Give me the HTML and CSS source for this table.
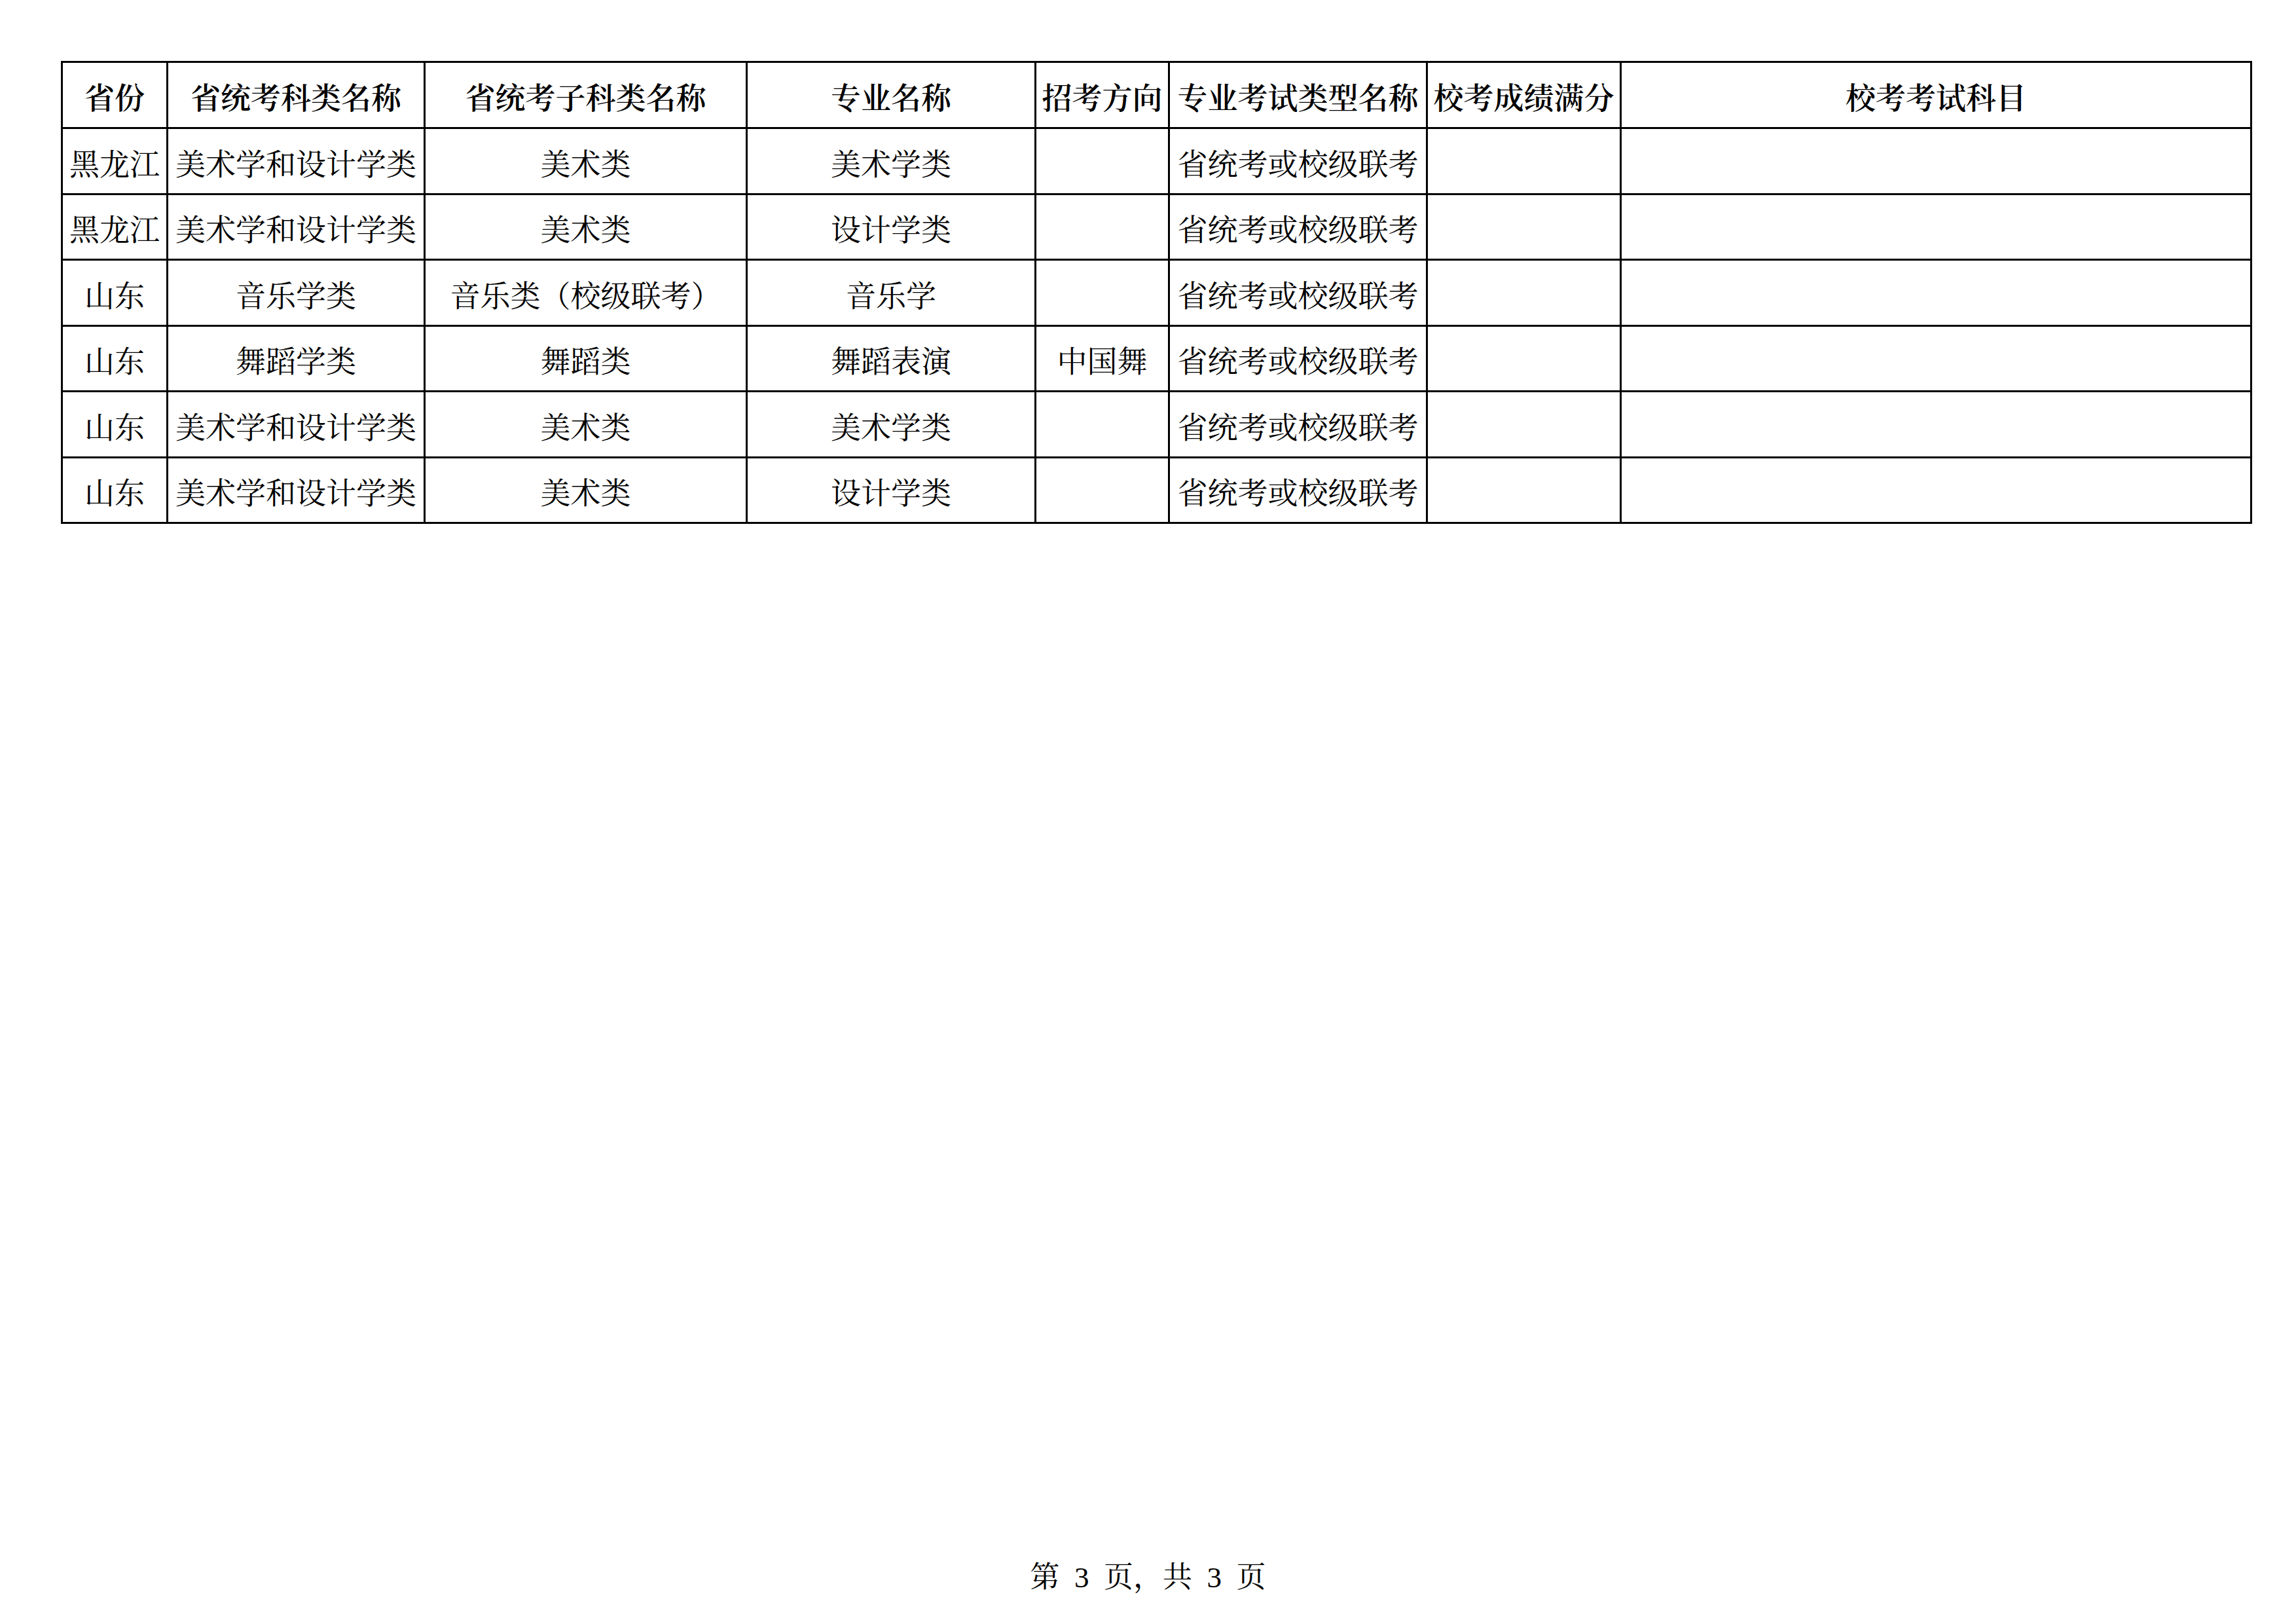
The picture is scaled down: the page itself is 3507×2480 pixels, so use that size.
FILE: index.html
```html
<!DOCTYPE html>
<html lang="zh-CN">
<head>
<meta charset="utf-8">
<title>第 3 页</title>
<link rel="stylesheet" href="styles.css">
</head>
<body>
<div class="page">
  <div class="sheet">
    <div class="cell head">省份</div>
    <div class="cell head">省统考科类名称</div>
    <div class="cell head">省统考子科类名称</div>
    <div class="cell head">专业名称</div>
    <div class="cell head">招考方向</div>
    <div class="cell head">专业考试类型名称</div>
    <div class="cell head">校考成绩满分</div>
    <div class="cell head">校考考试科目</div>

    <div class="cell">黑龙江</div>
    <div class="cell">美术学和设计学类</div>
    <div class="cell">美术类</div>
    <div class="cell">美术学类</div>
    <div class="cell"></div>
    <div class="cell">省统考或校级联考</div>
    <div class="cell"></div>
    <div class="cell"></div>

    <div class="cell">黑龙江</div>
    <div class="cell">美术学和设计学类</div>
    <div class="cell">美术类</div>
    <div class="cell">设计学类</div>
    <div class="cell"></div>
    <div class="cell">省统考或校级联考</div>
    <div class="cell"></div>
    <div class="cell"></div>

    <div class="cell">山东</div>
    <div class="cell">音乐学类</div>
    <div class="cell">音乐类（校级联考）</div>
    <div class="cell">音乐学</div>
    <div class="cell"></div>
    <div class="cell">省统考或校级联考</div>
    <div class="cell"></div>
    <div class="cell"></div>

    <div class="cell">山东</div>
    <div class="cell">舞蹈学类</div>
    <div class="cell">舞蹈类</div>
    <div class="cell">舞蹈表演</div>
    <div class="cell">中国舞</div>
    <div class="cell">省统考或校级联考</div>
    <div class="cell"></div>
    <div class="cell"></div>

    <div class="cell">山东</div>
    <div class="cell">美术学和设计学类</div>
    <div class="cell">美术类</div>
    <div class="cell">美术学类</div>
    <div class="cell"></div>
    <div class="cell">省统考或校级联考</div>
    <div class="cell"></div>
    <div class="cell"></div>

    <div class="cell">山东</div>
    <div class="cell">美术学和设计学类</div>
    <div class="cell">美术类</div>
    <div class="cell">设计学类</div>
    <div class="cell"></div>
    <div class="cell">省统考或校级联考</div>
    <div class="cell"></div>
    <div class="cell"></div>
  </div>
  <div class="footer">第 3 页，共 3 页</div>
</div>
</body>
</html>
```

FILE: styles.css
```css
html, body {
  margin: 0;
  padding: 0;
  background: #ffffff;
}

.page {
  width: 3507px;
  height: 2480px;
  box-sizing: border-box;
  padding: 93px 0 0 93px;
  color: #000000;
  font-family: "Noto Serif CJK SC", "Noto Sans CJK SC", serif;
}

.sheet {
  display: grid;
  grid-template-columns: 161px 393px 492px 441px 204px 394px 296px 963px;
  grid-template-rows: 101px 101px 100px 101px 100px 101px 100px;
  width: max-content;
  border-top: 3px solid #000;
  border-left: 3px solid #000;
}

.cell {
  box-sizing: border-box;
  border-right: 3px solid #000;
  border-bottom: 3px solid #000;
  display: flex;
  align-items: center;
  justify-content: center;
  padding-top: 1px;
  font-size: 46px;
  line-height: 1;
  font-weight: 400;
  white-space: nowrap;
  overflow: hidden;
}

.head {
  font-weight: 600;
}

.footer {
  margin: 1587px 0 0 -93px;
  width: 3507px;
  text-align: center;
  font-family: "Liberation Serif", "Noto Serif CJK SC", "Noto Sans CJK SC", serif;
  font-size: 45px;
  line-height: 45px;
  word-spacing: 0.25em;
  white-space: pre;
}
```
